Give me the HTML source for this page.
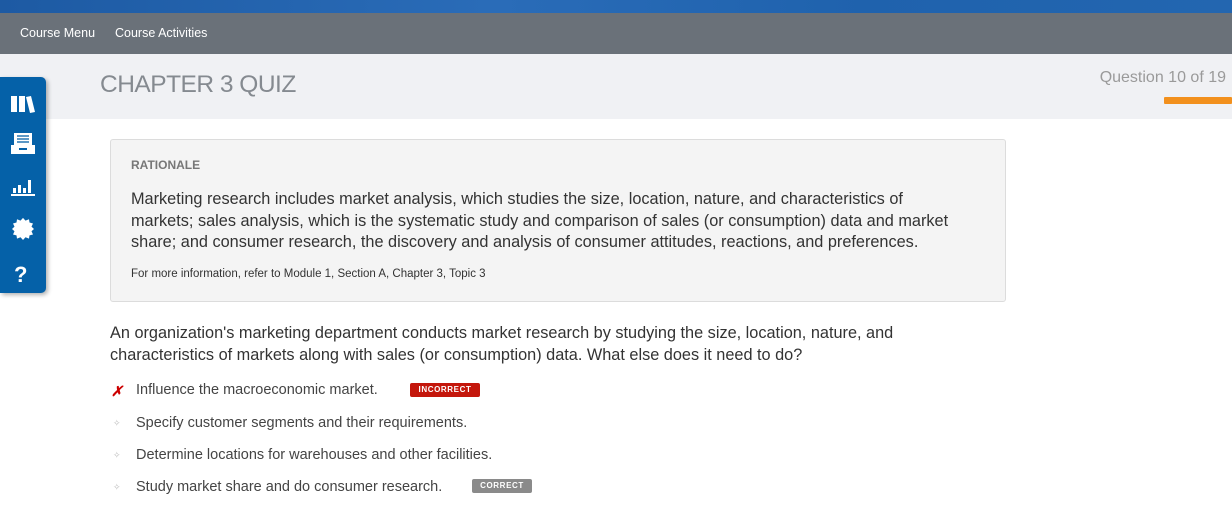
<!DOCTYPE html>
<html><head><meta charset="utf-8"><style>
*{margin:0;padding:0;box-sizing:border-box}
body{width:1232px;height:516px;overflow:hidden;background:#fff;font-family:"Liberation Sans",sans-serif;position:relative;color:#333}
.banner{position:absolute;left:0;top:0;width:1232px;height:13px;background:linear-gradient(90deg,#1d5aa3,#2a6cb8 40%,#1f62ad 70%,#2366b0)}
.nav{position:absolute;left:0;top:13px;width:1232px;height:41px;background:#6a7179;color:#fff;font-size:12.5px}
.nav span{position:absolute;top:13px}
.hdr{position:absolute;left:0;top:54px;width:1232px;height:65px;background:#f0f1f4}
.title{position:absolute;left:100px;top:71px;font-size:24.5px;color:#858a90;letter-spacing:-.5px}
.qn{position:absolute;right:6px;top:69px;font-size:16px;color:#9a9a9a}
.bar{position:absolute;left:1164px;top:97px;width:68px;height:7px;background:#f2901d;border-radius:1px}
.side{position:absolute;left:0;top:77px;width:46px;height:216px;background:#0561a8;border-radius:0 5px 5px 0;box-shadow:2px 2px 4px rgba(0,0,0,.3)}
.side svg{position:absolute;left:10px}
.box{position:absolute;left:110px;top:139px;width:896px;height:163px;background:#f4f4f4;border:1px solid #dcdcdc;border-radius:3px}
.rl{position:absolute;left:20px;top:18px;font-size:12px;font-weight:bold;color:#777}
.rt{position:absolute;left:20px;top:49px;width:845px;font-size:16.3px;line-height:21.5px;color:#333}
.ri{position:absolute;left:20px;top:128px;font-size:11.5px;color:#333}
.q{position:absolute;left:110px;top:322px;width:860px;font-size:16.3px;line-height:22px;color:#333}
.opt{position:absolute;left:136px;font-size:14.5px;color:#444}
.mk{position:absolute;left:113px;font-size:9px;color:#bbb}
.tag{position:absolute;height:14px;font-size:8px;font-weight:bold;color:#fff;letter-spacing:.6px;text-align:center;line-height:14px;border-radius:2px}
</style></head><body>
<div class="banner"></div>
<div class="nav"><span style="left:20px">Course Menu</span><span style="left:115px">Course Activities</span></div>
<div class="hdr"></div>
<div class="title">CHAPTER 3 QUIZ</div>
<div class="qn">Question 10 of 19</div>
<div class="bar"></div>
<div class="side">
<svg style="top:17px" width="26" height="20" viewBox="0 0 26 20"><rect x="1" y="2" width="6" height="16" fill="#fff"/><rect x="9" y="2" width="6" height="16" fill="#fff"/><path d="M16 3l5-1 4 16-5 1z" fill="#fff"/></svg>
<svg style="top:55px" width="26" height="24" viewBox="0 0 26 24"><rect x="4" y="1" width="18" height="13" fill="#fff"/><g stroke="#0561a8" stroke-width="1.3"><line x1="7" y1="4" x2="19" y2="4"/><line x1="7" y1="7" x2="19" y2="7"/><line x1="7" y1="10" x2="19" y2="10"/></g><path d="M1 13h24v9H1z" fill="#fff"/><rect x="9" y="16" width="8" height="2" fill="#0561a8"/></svg>
<svg style="top:100px" width="26" height="20" viewBox="0 0 26 20"><rect x="3" y="11" width="3" height="5" fill="#fff"/><rect x="8" y="8" width="3" height="8" fill="#fff"/><rect x="13" y="11" width="3" height="5" fill="#fff"/><rect x="18" y="3" width="3" height="13" fill="#fff"/><rect x="1" y="17" width="24" height="2" fill="#fff"/></svg>
<svg style="top:141px" width="26" height="24" viewBox="0 0 26 24"><polygon points="13,1 15.5,4 19,2.5 19.5,6 23,7 21.5,10.5 24,13 21.5,15.5 23,19 19.5,20 19,23.5 15.5,22 13,25 10.5,22 7,23.5 6.5,20 3,19 4.5,15.5 2,13 4.5,10.5 3,7 6.5,6 7,2.5 10.5,4" transform="translate(0,-1) scale(1,0.92)" fill="#fff"/></svg>
<div style="position:absolute;left:14px;top:185px;color:#fff;font-weight:bold;font-size:22px">?</div>
</div>
<div class="box">
<div class="rl">RATIONALE</div>
<div class="rt">Marketing research includes market analysis, which studies the size, location, nature, and characteristics of<br>markets; sales analysis, which is the systematic study and comparison of sales (or consumption) data and market<br>share; and consumer research, the discovery and analysis of consumer attitudes, reactions, and preferences.</div>
<div class="ri">For more information, refer to Module 1, Section A, Chapter 3, Topic 3</div>
</div>
<div class="q">An organization's marketing department conducts market research by studying the size, location, nature, and characteristics of markets along with sales (or consumption) data. What else does it need to do?</div>
<div class="mk" style="top:383px;left:111px;color:#c00;font-size:14px;font-weight:bold;font-style:italic">✗</div>
<div class="opt" style="top:382px">Influence the macroeconomic market.</div>
<div class="tag" style="left:410px;top:383px;width:70px;background:#c4170c">INCORRECT</div>
<div class="mk" style="top:418px">✧</div>
<div class="opt" style="top:415px">Specify customer segments and their requirements.</div>
<div class="mk" style="top:450px">✧</div>
<div class="opt" style="top:447px">Determine locations for warehouses and other facilities.</div>
<div class="mk" style="top:482px">✧</div>
<div class="opt" style="top:479px">Study market share and do consumer research.</div>
<div class="tag" style="left:472px;top:479px;width:60px;background:#8a8a8a">CORRECT</div>
</body></html>
